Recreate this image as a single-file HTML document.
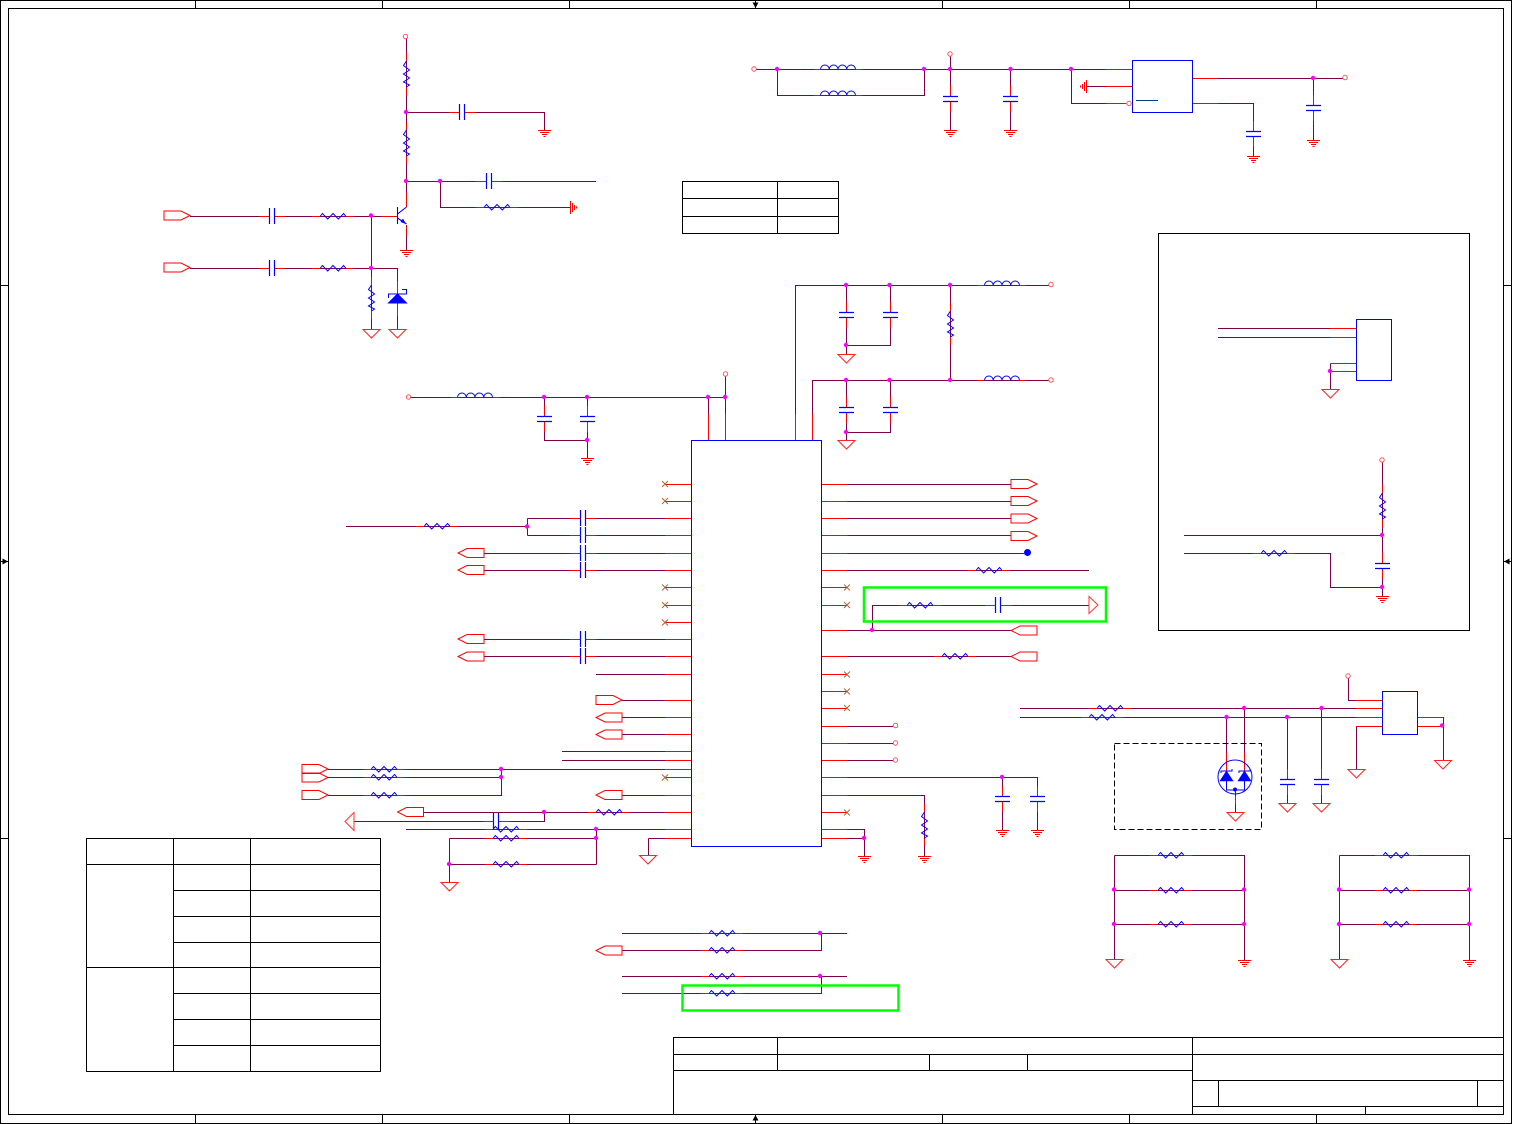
<!DOCTYPE html>
<html>
<head>
<meta charset="utf-8">
<title>Schematic</title>
<style>
html,body{margin:0;padding:0;background:#fff}
svg{display:block}
</style>
</head>
<body>
<svg xmlns="http://www.w3.org/2000/svg" width="1513" height="1124" viewBox="0 0 1513 1124" fill="none">
<defs>
<g id="r"><path d="M-21 .5H-13M13 .5H21" stroke="#f00" shape-rendering="crispEdges"/><path d="M-13 .5L-10.6 -2.5L-5.3 3L0 -2.5L5.3 3L10.6 -2.5L13 .5" stroke="#00f"/></g>
<g id="rv"><path d="M.5 -21V-13M.5 13V21" stroke="#f00" shape-rendering="crispEdges"/><path d="M.5 -13L-2.5 -8.5L3.5 -4L-2.5 0L3.5 4L-2.5 8L3.5 11L.5 13" stroke="#00f"/></g>
<g id="ch"><path d="M-13 .5H-2.5M2.5 .5H13" stroke="#f00" shape-rendering="crispEdges"/><path d="M-2.5 -8V8M2.5 -8V8" stroke="#00f" stroke-width="1.2"/><path d="M-2 .5H2" stroke="#fff"/></g>
<g id="cv"><path d="M.5 -13V-2.5M.5 2.5V13" stroke="#f00" shape-rendering="crispEdges"/><path d="M-7 -2.5H8M-7 2.5H8" stroke="#00f" stroke-width="1.2"/><path d="M.5 -2V2" stroke="#fff"/></g>
<g id="l"><path d="M-24 .5H-17.5M17.5 .5H24" stroke="#f00" shape-rendering="crispEdges"/><path d="M-17.5 .5a4.375 4.5 0 0 1 8.75 0a4.375 4.5 0 0 1 8.75 0a4.375 4.5 0 0 1 8.75 0a4.375 4.5 0 0 1 8.75 0" stroke="#00f"/></g>
<g id="t"><path d="M-8.5 .5H8.5L0 9Z" stroke="#f22"/></g>
<g id="e"><path d="M-6.5 .5H6.5M-4.5 2.5H4.5M-2.5 4.5H2.5M-1 6.5H1" stroke="#f00" shape-rendering="crispEdges"/></g>
<circle id="o" cx="0" cy="0" r="2.2" stroke="#f55"/>
<circle id="n" cx="0" cy="0" r="2.2" fill="#f0f"/>
<g id="x"><path d="M-3 -3L3 3M-3 3L3 -3" stroke="#a86a38"/></g>
<path id="tr" d="M0 -4.5H17L26 0L17 4.5H0Z" stroke="#f00"/>
<path id="tl" d="M26 -4.5H9L0 0L9 4.5H26Z" stroke="#f00"/>
</defs>

<!-- sheet frame -->
<g stroke="#000" shape-rendering="crispEdges" stroke-width="1.2">
<rect x=".5" y=".5" width="1511" height="1123"/>
<rect x="8.5" y="8.5" width="1495" height="1106"/>
<path d="M195.5 0V8M382.5 0V8M569.5 0V8M942.5 0V8M1129.5 0V8M1316.5 0V8M195.5 1115V1124M382.5 1115V1124M569.5 1115V1124M942.5 1115V1124M1129.5 1115V1124M1316.5 1115V1124M0 285.5H8M0 838.5H8M1504 285.5H1512M1504 838.5H1512"/>
<path d="M755.5 0V8M755.5 1115V1124M0 561.5H8M1504 561.5H1512"/>
<!-- small table -->
<path d="M682.5 181.5H838.5V233.5H682.5ZM682.5 198.5H838.5M682.5 216.5H838.5M777.5 181.5V233.5"/>
<!-- inset box -->
<rect x="1158.5" y="233.5" width="311" height="397"/>
<!-- big table -->
<path d="M86.5 838.5H380.5V1071.5H86.5ZM173.5 838.5V1071.5M250.5 838.5V1071.5M86.5 864.5H380.5M173.5 890.5H380.5M173.5 916.5H380.5M173.5 942.5H380.5M86.5 967.5H380.5M173.5 993.5H380.5M173.5 1019.5H380.5M173.5 1045.5H380.5"/>
<!-- title block -->
<path d="M673.5 1114V1037.5H1503M673.5 1054.5H1503M673.5 1070.5H1192.5M777.5 1037.5V1070.5M929.5 1054.5V1070.5M1027.5 1054.5V1070.5M1192.5 1037.5V1114M1192.5 1080.5H1503M1192.5 1106.5H1503M1218.5 1080.5V1106.5M1477.5 1080.5V1106.5M1365.5 1106.5V1114"/>
</g>
<path d="M752.5 2.5H758.5L755.5 8ZM752.5 1120.5H758.5L755.5 1115ZM2.5 558.5V564.5L8 561.5ZM1509.5 558.5V564.5L1504 561.5Z" fill="#000"/>

<!-- wires -->
<path shape-rendering="crispEdges" stroke="#800048" d="
M406.5 38V207M406.5 112.5H544.5V130M406.5 181.5H596M440.5 181.5V207.5H570M190 216.5H397M190 268.5H397.5V329M371.5 216V329M406.5 225V250
M756 69.5H1132M777.5 69.5V95.5H924.5V69.5M950.5 56V130M1010.5 69.5V130M1071.5 69.5V103.5H1126M1086 86.5H1132M1192 78.5H1343M1192 103.5H1253.5V156M1313.5 78.5V140
M795.5 440V285.5H1049M812.5 440V380.5H1049M846.5 285.5V354M846.5 345.5H890.5V285.5M950.5 285.5V380.5M846.5 380.5V440M846.5 432.5H890.5V380.5
M410 397.5H725.5M544.5 397.5V440.5H587.5M587.5 397.5V458M708.5 397.5V440M725.5 376V440
M346 526.5H527.5M527.5 518.5V535.5M527.5 518.5H691M527.5 535.5H691M484.5 553.5H691M484.5 570.5H691M484.5 639.5H691M484.5 656.5H691M596 674.5H691M622 700.5H691M622 717.5H691M622 734.5H691M562 751.5H691M562 760.5H691M328 769.5H691M328 777.5H501.5M328 795.5H501.5V769.5M622 795.5H691M424 812.5H691M544.5 812.5V821.5H354M406 829.5H691M449.5 838.5H596.5M449.5 864.5H596.5M596.5 829.5V864.5M449.5 838.5V882M648.5 838.5H691M648.5 838.5V855
M821 484.5H1011M821 501.5H1011M821 518.5H1011M821 535.5H1011M821 553.5H1024M821 570.5H1089M821 630.5H1011M821 656.5H1011M872.5 630.5V605.5H1089M821 726.5H893M821 743.5H893M821 760.5H893M821 777.5H1037.5V830M1002.5 777.5V830M821 795.5H924.5V856M821 829.5H864.5V856M821 838.5H864.5
M1020 708.5H1382M1020 717.5H1382M1348.5 678V700.5H1382M1356.5 769V726.5H1382M1417 717.5H1443.5V760M1417 726.5H1443.5M1226.5 717.5V771M1244.5 708.5V771M1287.5 717.5V803M1321.5 708.5V803M1235.5 790V812
M1114.5 855.5H1244.5V960M1114.5 855.5V959M1114.5 890.5H1244.5M1114.5 924.5H1244.5M1339.5 855.5H1469.5V960M1339.5 855.5V959M1339.5 890.5H1469.5M1339.5 924.5H1469.5
M622 933.5H847M622 950.5H821.5V933.5M622 976.5H847M622 993.5H821.5V976.5
M1218 328.5H1356M1218 337.5H1356M1330.5 363.5H1356M1330.5 363.5V389M1330.5 371.5H1356M1382.5 462V596M1184 535.5H1382.5M1184 553.5H1330.5V587.5H1382.5
"/>

<!-- red pin stubs -->
<path shape-rendering="crispEdges" stroke="#f00" d="
M665 484.5h26M665 501.5h26M665 518.5h26M665 535.5h26M665 553.5h26M665 570.5h26M665 587.5h26M665 605.5h26M665 622.5h26M665 639.5h26M665 656.5h26M665 674.5h26M665 700.5h26M665 717.5h26M665 734.5h26M665 751.5h26M665 760.5h26M665 769.5h26M665 777.5h26M665 795.5h26M665 812.5h26M665 829.5h26M665 838.5h26
M821 484.5h26M821 501.5h26M821 518.5h26M821 535.5h26M821 553.5h26M821 570.5h26M821 587.5h26M821 605.5h26M821 630.5h26M821 656.5h26M821 674.5h26M821 691.5h26M821 708.5h26M821 726.5h26M821 743.5h26M821 760.5h26M821 777.5h26M821 795.5h26M821 812.5h26M821 829.5h26M821 838.5h26
M708.5 414V440M725.5 414V440M795.5 414V440M812.5 414V440
M1356 700.5h26M1356 708.5h26M1356 717.5h26M1356 726.5h26M1417 717.5h26M1417 726.5h26
M1330 328.5h26M1330 337.5h26M1330.5 363.5h26M1330.5 371.5h26
M1106 69.5h26M1106 86.5h26M1106 103.5h20M1192 78.5h26M1192 103.5h26
M406.5 193V207M406.5 225V236M381 216.5H397M397.5 281V294M397.5 303V316
M1226.5 753V771M1244.5 753V771M1235.5 796V804
"/>

<!-- blue chips -->
<g stroke="#00f" shape-rendering="crispEdges" stroke-width="1.2">
<rect x="691.5" y="440.5" width="130" height="406"/>
<rect x="1382.5" y="691.5" width="35" height="43"/>
<rect x="1356.5" y="319.5" width="35" height="61"/>
<rect x="1132.5" y="60.5" width="60" height="52"/>
</g>
<path d="M1136 100.5H1158" stroke="#004080" shape-rendering="crispEdges"/>

<!-- resistors -->
<use href="#rv" x="406" y="74"/><use href="#rv" x="406" y="143"/><use href="#rv" x="371" y="298"/><use href="#rv" x="950" y="324"/><use href="#rv" x="924" y="825"/><use href="#rv" x="1382" y="506"/>
<use href="#r" x="497" y="207"/><use href="#r" x="333" y="216"/><use href="#r" x="333" y="268"/>
<use href="#r" x="437" y="526"/><use href="#r" x="384" y="769"/><use href="#r" x="384" y="777"/><use href="#r" x="384" y="795"/><use href="#r" x="609" y="812"/><use href="#r" x="506" y="829"/><use href="#r" x="506" y="838"/><use href="#r" x="506" y="864"/>
<use href="#r" x="989" y="570"/><use href="#r" x="920" y="605"/><use href="#r" x="955" y="656"/>
<use href="#r" x="1110" y="708"/><use href="#r" x="1102" y="717"/><use href="#r" x="1274" y="553"/>
<use href="#r" x="1171" y="855"/><use href="#r" x="1171" y="890"/><use href="#r" x="1171" y="924"/><use href="#r" x="1396" y="855"/><use href="#r" x="1396" y="890"/><use href="#r" x="1396" y="924"/>
<use href="#r" x="722" y="933"/><use href="#r" x="722" y="950"/><use href="#r" x="722" y="976"/><use href="#r" x="722" y="993"/>

<!-- caps -->
<use href="#ch" x="462" y="112"/><use href="#ch" x="489" y="181"/><use href="#ch" x="272" y="216"/><use href="#ch" x="272" y="268"/>
<use href="#ch" x="583" y="518"/><use href="#ch" x="583" y="535"/><use href="#ch" x="583" y="553"/><use href="#ch" x="583" y="570"/><use href="#ch" x="583" y="639"/><use href="#ch" x="583" y="656"/><use href="#ch" x="496" y="821"/><use href="#ch" x="998" y="605"/>
<use href="#cv" x="950" y="99"/><use href="#cv" x="1010" y="99"/><use href="#cv" x="1253" y="134"/><use href="#cv" x="1313" y="108"/>
<use href="#cv" x="846" y="315"/><use href="#cv" x="890" y="315"/><use href="#cv" x="846" y="410"/><use href="#cv" x="890" y="410"/>
<use href="#cv" x="544" y="419"/><use href="#cv" x="587" y="419"/><use href="#cv" x="1002" y="799"/><use href="#cv" x="1037" y="799"/><use href="#cv" x="1287" y="782"/><use href="#cv" x="1321" y="782"/><use href="#cv" x="1382" y="566"/>

<!-- inductors -->
<use href="#l" x="838" y="69"/><use href="#l" x="838" y="95"/><use href="#l" x="1002" y="285"/><use href="#l" x="1002" y="380"/><use href="#l" x="475" y="397"/>

<!-- ground triangles -->
<use href="#t" x="371.5" y="329"/><use href="#t" x="397.5" y="329"/><use href="#t" x="846.5" y="354"/><use href="#t" x="846.5" y="440"/><use href="#t" x="449.5" y="882"/><use href="#t" x="648" y="855"/><use href="#t" x="1330.5" y="389"/><use href="#t" x="1356.5" y="769"/><use href="#t" x="1443" y="760"/><use href="#t" x="1235.5" y="812"/><use href="#t" x="1287.5" y="803"/><use href="#t" x="1321.5" y="803"/><use href="#t" x="1114.5" y="959"/><use href="#t" x="1339.5" y="959"/>

<!-- earth -->
<use href="#e" x="544.5" y="130"/><use href="#e" x="406.5" y="250"/><use href="#e" x="950.5" y="130"/><use href="#e" x="1010.5" y="130"/><use href="#e" x="1253.5" y="156"/><use href="#e" x="1313.5" y="140"/><use href="#e" x="587.5" y="458"/><use href="#e" x="1002.5" y="830"/><use href="#e" x="1037.5" y="830"/><use href="#e" x="864.5" y="856"/><use href="#e" x="924.5" y="856"/><use href="#e" x="1244.5" y="960"/><use href="#e" x="1469.5" y="960"/><use href="#e" x="1382.5" y="596"/>
<path shape-rendering="crispEdges" d="M570.5 201V214M572.5 203V212M574.5 205V210M576.5 206.5V208.5" stroke="#f00"/>
<path shape-rendering="crispEdges" d="M1086.5 80V93M1084.5 82V91M1082.5 84V89M1080.5 85.5V87.5" stroke="#f00"/>

<!-- tags -->
<use href="#tr" x="164" y="215.5"/><use href="#tr" x="164" y="267.5"/>
<use href="#tl" x="458" y="553"/><use href="#tl" x="458" y="570"/><use href="#tl" x="458" y="639"/><use href="#tl" x="458" y="656.5"/>
<use href="#tr" x="596" y="700"/><use href="#tl" x="596" y="717.5"/><use href="#tl" x="596" y="734.5"/><use href="#tl" x="596" y="795"/><use href="#tl" x="596" y="950.5"/>
<use href="#tr" x="302" y="769"/><use href="#tr" x="302" y="777.5"/><use href="#tr" x="302" y="795"/><use href="#tl" x="397.5" y="812"/>
<use href="#tr" x="1011" y="484"/><use href="#tr" x="1011" y="501"/><use href="#tr" x="1011" y="518.5"/><use href="#tr" x="1011" y="536"/>
<use href="#tl" x="1011" y="630.5"/><use href="#tl" x="1011" y="656.5"/>
<path d="M354 812.5L345 821.5L354 830.5Z" stroke="#f33"/>
<path d="M1089 596.5L1098 605L1089 613.5Z" stroke="#f33"/>

<!-- no connects -->
<use href="#x" x="665" y="484"/><use href="#x" x="665" y="501"/><use href="#x" x="665" y="587.5"/><use href="#x" x="665" y="605"/><use href="#x" x="665" y="622.5"/><use href="#x" x="665" y="777.5"/>
<use href="#x" x="847" y="587.5"/><use href="#x" x="847" y="605"/><use href="#x" x="847" y="674.5"/><use href="#x" x="847" y="691.5"/><use href="#x" x="847" y="708"/><use href="#x" x="847" y="812.5"/>

<!-- open circles -->
<use href="#o" x="405.5" y="36.5"/><use href="#o" x="754" y="69"/><use href="#o" x="950" y="54"/><use href="#o" x="1345" y="77.5"/><use href="#o" x="1129" y="103.5"/>
<use href="#o" x="1051" y="284.5"/><use href="#o" x="1051" y="380"/><use href="#o" x="408.5" y="397"/><use href="#o" x="725.5" y="374"/>
<use href="#o" x="895.5" y="725.5"/><use href="#o" x="895.5" y="743"/><use href="#o" x="895.5" y="760"/><use href="#o" x="1348" y="676"/><use href="#o" x="1382" y="460"/>

<!-- junction dots -->
<use href="#n" x="406" y="112"/><use href="#n" x="406" y="181"/><use href="#n" x="440" y="181"/><use href="#n" x="371" y="215.5"/><use href="#n" x="371" y="268"/>
<use href="#n" x="777" y="69"/><use href="#n" x="924" y="69"/><use href="#n" x="950" y="69"/><use href="#n" x="1010.5" y="69"/><use href="#n" x="1071" y="69"/><use href="#n" x="1313" y="78"/>
<use href="#n" x="846" y="285"/><use href="#n" x="889.5" y="285"/><use href="#n" x="950" y="285"/><use href="#n" x="846" y="345"/><use href="#n" x="846" y="380"/><use href="#n" x="889.5" y="380"/><use href="#n" x="950" y="380"/><use href="#n" x="846" y="432"/>
<use href="#n" x="544" y="397"/><use href="#n" x="587" y="397"/><use href="#n" x="587" y="440"/><use href="#n" x="708" y="397"/><use href="#n" x="725" y="397"/>
<use href="#n" x="527" y="526.5"/><use href="#n" x="501" y="769"/><use href="#n" x="501" y="777"/><use href="#n" x="544" y="812"/><use href="#n" x="596" y="829"/><use href="#n" x="596" y="838"/><use href="#n" x="449" y="864"/>
<use href="#n" x="872" y="630"/><use href="#n" x="1002" y="777"/><use href="#n" x="864" y="838"/>
<use href="#n" x="1244" y="708"/><use href="#n" x="1226.5" y="717"/><use href="#n" x="1287" y="717"/><use href="#n" x="1321.5" y="708"/><use href="#n" x="1442" y="725.5"/>
<use href="#n" x="1114" y="889.5"/><use href="#n" x="1244" y="889.5"/><use href="#n" x="1114" y="924"/><use href="#n" x="1244" y="924"/><use href="#n" x="1339" y="889.5"/><use href="#n" x="1469" y="889.5"/><use href="#n" x="1339" y="924"/><use href="#n" x="1469" y="924"/>
<use href="#n" x="820" y="933"/><use href="#n" x="820" y="976"/>
<use href="#n" x="1330" y="371"/><use href="#n" x="1382" y="535"/><use href="#n" x="1382" y="587"/>

<!-- transistor -->
<path d="M397.5 207V224M397.5 214L406.5 207M397.5 218L406.5 224" stroke="#00f" stroke-width="1.1"/>
<path d="M406 224L400.5 222L403 218.5Z" fill="#00f"/>

<!-- zener -->
<path d="M388.5 303H406.5L397.5 294Z" fill="#00f" stroke="#00f"/>
<path d="M388.5 298V294H406.5V289.5H402" stroke="#00f"/>

<!-- dual diode -->
<ellipse cx="1235" cy="777" rx="17" ry="17" stroke="#00f"/>
<path d="M1220 781H1233L1226.5 771ZM1238 781H1251L1244.5 771Z" fill="#00f" stroke="#00f" stroke-width=".6"/>
<path d="M1221 773V771H1232V769M1239 773V771H1250V769M1226.5 781V790H1244.5V781" stroke="#00f"/>
<circle cx="1235" cy="789.5" r="2" fill="#00f"/>
<path d="M1114.5 743.5H1261.5V829.5H1114.5Z" stroke="#000" stroke-dasharray="6 3" shape-rendering="crispEdges"/>

<!-- test point -->
<circle cx="1027.5" cy="552.5" r="3.5" fill="#00f"/>

<!-- green highlights -->
<rect x="864" y="587.5" width="242" height="34" stroke="#0f0" stroke-width="2.5"/>
<rect x="682.5" y="985.5" width="216" height="25" stroke="#0f0" stroke-width="2.5"/>
</svg>
</body>
</html>
